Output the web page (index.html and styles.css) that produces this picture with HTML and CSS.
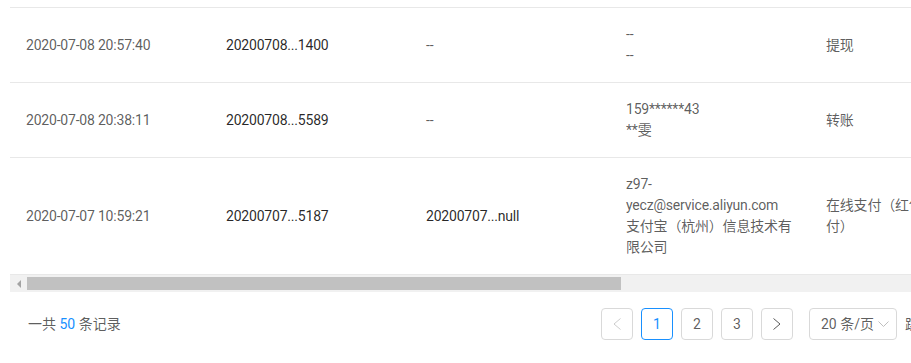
FILE: index.html
```html
<!DOCTYPE html>
<html lang="zh-CN">
<head>
<meta charset="utf-8">
<title>交易记录</title>
<link rel="stylesheet" href="styles.css">
</head>
<body>
<div class="page">
  <div class="table-wrap">
    <table class="records">
      <colgroup>
        <col class="c-w"><col class="c-w"><col class="c-w"><col class="c-w"><col class="c-narrow"><col class="c-w">
      </colgroup>
      <tbody>
        <tr>
          <td class="muted">2020-07-08 20:57:40</td>
          <td class="strong">20200708...1400</td>
          <td class="muted">--</td>
          <td class="muted">--<br>--</td>
          <td class="muted">提现</td>
          <td class="muted">-</td>
        </tr>
        <tr>
          <td class="muted">2020-07-08 20:38:11</td>
          <td class="strong">20200708...5589</td>
          <td class="muted">--</td>
          <td class="muted">159******43<br>**雯</td>
          <td class="muted">转账</td>
          <td class="muted">-</td>
        </tr>
        <tr>
          <td class="muted">2020-07-07 10:59:21</td>
          <td class="strong">20200707...5187</td>
          <td class="strong">20200707...null</td>
          <td class="muted">z97-yecz@service.aliyun.com<br>支付宝（杭州）信息技术有限公司</td>
          <td class="muted">在线支付（红包支付）</td>
          <td class="muted">-</td>
        </tr>
      </tbody>
    </table>
    <div class="hscroll">
      <div class="hscroll-btn"><span class="tri"></span></div>
      <div class="hscroll-thumb"></div>
    </div>
  </div>
  <div class="footer">
    <div class="total">一共 <span class="num">50</span> 条记录</div>
    <ul class="pager">
      <li class="item disabled"><svg width="8" height="12" viewBox="0 0 8 12"><polyline points="7.5,0.5 1,6 7.5,11.5" fill="none" stroke="currentColor" stroke-width="1"/></svg></li>
      <li class="item active">1</li>
      <li class="item">2</li>
      <li class="item">3</li>
      <li class="item"><svg width="8" height="12" viewBox="0 0 8 12"><polyline points="0.5,0.5 7,6 0.5,11.5" fill="none" stroke="currentColor" stroke-width="1"/></svg></li>
      <li class="size-select">20 条/页<svg class="caret" width="11" height="6" viewBox="0 0 11 6"><polyline points="0.5,0.5 5.5,5.5 10.5,0.5" fill="none" stroke="currentColor" stroke-width="1"/></svg></li>
      <li class="jumper">跳至 <span class="jump-input"></span> 页</li>
    </ul>
  </div>
</div>
</body>
</html>
```
FILE: styles.css
```css
* { box-sizing: border-box; }
html, body { margin: 0; padding: 0; background: #fff; overflow: hidden; }
body {
  font-family: Roboto, "Noto Sans CJK SC", sans-serif;
  font-size: 14px;
  line-height: 21px;
  color: rgba(0,0,0,0.65);
}
.page {
  width: 1200px;
  padding: 7px 0 0 10px;
}
.table-wrap { width: 1100px; }
.records {
  border-collapse: collapse;
  table-layout: fixed;
  width: 1100px;
  border-top: 1px solid #e8e8e8;
}
.c-w { width: 200px; }
.c-narrow { width: 150px; }
.records td {
  padding: 16px;
  border-bottom: 1px solid #e8e8e8;
  vertical-align: middle;
  word-break: normal;
  overflow-wrap: break-word;
  letter-spacing: -0.2px;
}
.muted { color: rgba(0,0,0,0.65); }
.strong { color: rgba(0,0,0,0.85); }
.hscroll {
  display: flex;
  height: 17px;
  background: #f1f1f1;
}
.hscroll-btn {
  width: 17px;
  display: flex;
  align-items: center;
  justify-content: center;
}
.tri {
  width: 0; height: 0;
  border-top: 4px solid transparent;
  border-bottom: 4px solid transparent;
  border-right: 4px solid #a3a3a3;
}
.hscroll-thumb {
  width: 594px;
  margin: 2px 0;
  background: #c1c1c1;
}
.footer {
  display: flex;
  align-items: center;
  margin-top: 16px;
}
.total {
  width: 591px;
  padding-left: 18px;
}
.num { color: #1890ff; }
.pager {
  display: flex;
  align-items: center;
  list-style: none;
  margin: 0;
  padding: 0;
}
.item {
  width: 32px;
  height: 32px;
  margin-right: 8px;
  border: 1px solid #d9d9d9;
  border-radius: 4px;
  display: flex;
  align-items: center;
  justify-content: center;
  color: rgba(0,0,0,0.65);
  line-height: 30px;
}
.item.disabled { color: rgba(0,0,0,0.2); }
.item.active { border-color: #1890ff; color: #1890ff; }
.size-select {
  margin-left: 8px;
  width: 88px;
  height: 32px;
  border: 1px solid #d9d9d9;
  border-radius: 4px;
  padding: 0 7px 0 11px;
  display: flex;
  align-items: center;
  justify-content: space-between;
  white-space: nowrap;
}
.caret { color: #bfbfbf; }
.jumper {
  margin-left: 8px;
  display: flex;
  align-items: center;
  gap: 8px;
  white-space: nowrap;
}
.jump-input {
  display: inline-block;
  width: 50px;
  height: 32px;
  border: 1px solid #d9d9d9;
  border-radius: 4px;
}
```
